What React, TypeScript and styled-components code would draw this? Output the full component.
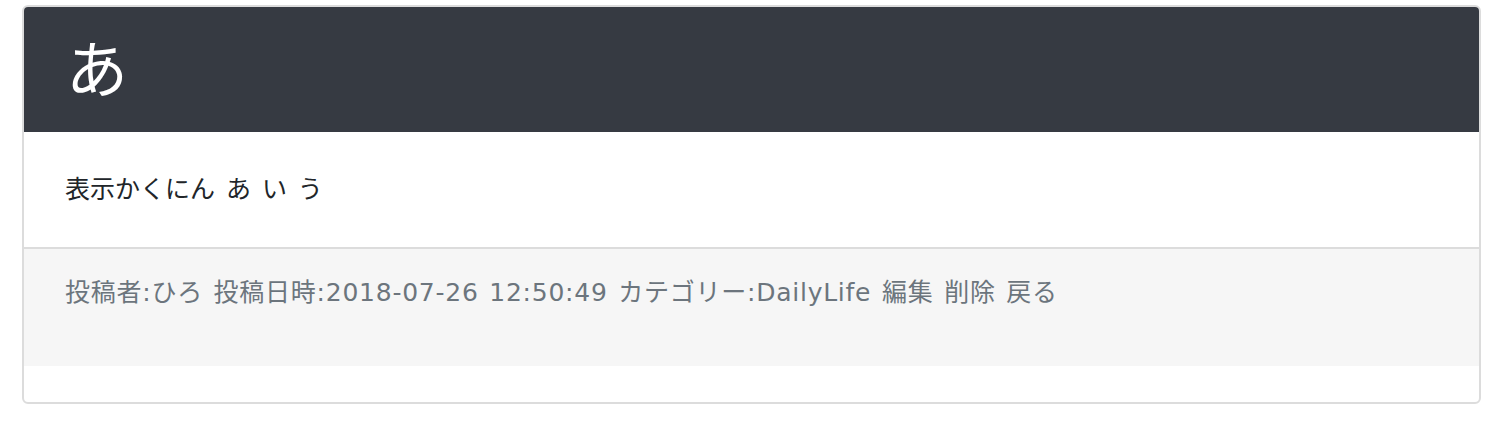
import React from "react";
import styled, { createGlobalStyle } from "styled-components";

const Global = createGlobalStyle`
  html, body { margin: 0; padding: 0; background: #ffffff; }
  body { font-family: "DejaVu Sans", "Noto Sans CJK JP", sans-serif; }
`;

const Page = styled.div`
  padding: 5px 15px 0 22px;
`;

const Card = styled.div`
  display: flex;
  flex-direction: column;
  border: 2px solid #dcdcdc;
  border-radius: 6px;
  overflow: hidden;
  height: 399px;
  box-sizing: border-box;
`;

const Header = styled.div`
  background: #363a42;
  height: 125px;
  box-sizing: border-box;
  display: flex;
  align-items: center;
  padding: 0 0 8px 42px;
`;

const Title = styled.h1`
  margin: 0;
  color: #ffffff;
  font-family: "Noto Sans CJK JP", sans-serif;
  font-size: 62px;
  font-weight: 400;
  line-height: 1;
`;

const Body = styled.div`
  height: 115px;
  display: flex;
  align-items: center;
  padding-left: 41px;
  border-bottom: 2px solid #dcdcdc;
`;

const Text = styled.p`
  margin: 0;
  color: #212529;
  font-size: 25px;
  line-height: 1;
  word-spacing: 3px;
`;

const Footer = styled.div`
  background: #f6f6f6;
  height: 117px;
  padding: 29px 0 0 41px;
  box-sizing: border-box;
`;

const Meta = styled.p`
  margin: 0;
  color: #6c757d;
  font-size: 25px;
  line-height: 1.2;
  letter-spacing: 0.75px;
  word-spacing: 2px;
`;

export default function App() {
  return (
    <>
      <Global />
      <Page>
        <Card>
          <Header>
            <Title>あ</Title>
          </Header>
          <Body>
            <Text>表示かくにん あ い う</Text>
          </Body>
          <Footer>
            <Meta>
              投稿者:ひろ 投稿日時:2018-07-26 12:50:49 カテゴリー:DailyLife 編集 削除 戻る
            </Meta>
          </Footer>
        </Card>
      </Page>
    </>
  );
}
